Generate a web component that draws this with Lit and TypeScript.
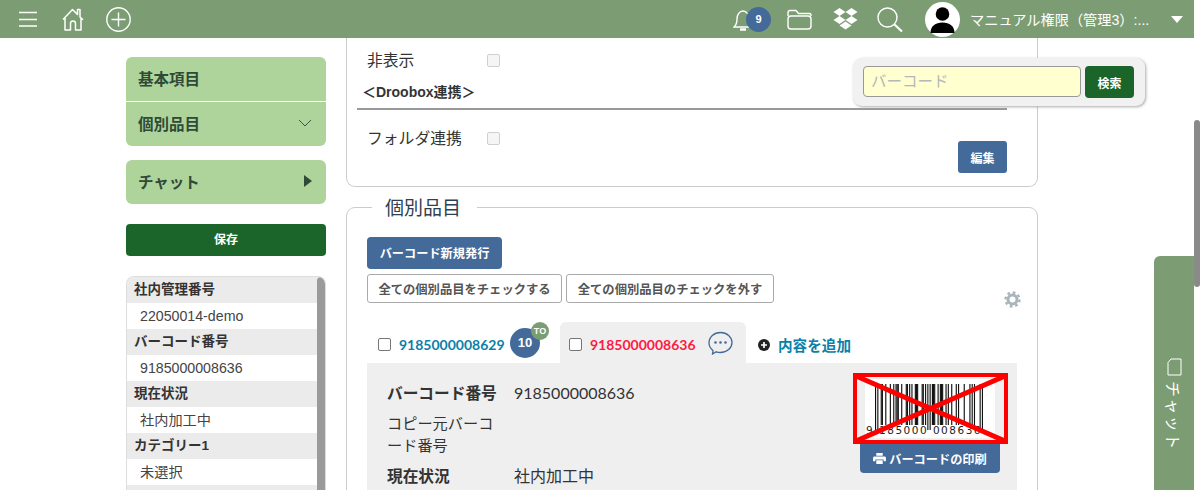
import { LitElement, html, css, svg } from "lit";
import { customElement } from "lit/decorators.js";

const L = ["0001101","0011001","0010011","0111101","0100011","0110001","0101111","0111011","0110111","0001011"];
const G = ["0100111","0110011","0011011","0100001","0011101","0111001","0000101","0010001","0001001","0010111"];
const R = ["1110010","1100110","1101100","1000010","1011100","1001110","1010000","1000100","1001000","1110100"];
const PARITY = "LGGLGL";

function ean(code: string): string {
  const d = code.split("").map(Number);
  let s = "101";
  for (let i = 0; i < 6; i++) s += (PARITY[i] === "L" ? L : G)[d[i + 1]];
  s += "01010";
  for (let i = 7; i < 13; i++) s += R[d[i]];
  return s + "101";
}

const SIDE_ROWS = [
  ["社内管理番号", "22050014-demo"],
  ["バーコード番号", "9185000008636"],
  ["現在状況", "社内加工中"],
  ["カテゴリー1", "未選択"],
  ["", ""],
];

@customElement("app-root")
export class AppRoot extends LitElement {
  static styles = css`
    :host {
      display: flex;
      position: relative;
      width: 1200px;
      height: 490px;
      overflow: hidden;
      background: #fff;
      font-family: "Liberation Sans", "Noto Sans CJK JP", sans-serif;
      color: #333;
    }
    * { box-sizing: border-box; }
    .page { width: 1194px; flex: none; display: flex; flex-direction: column; }
    .track { width: 6px; flex: none; padding-top: 120px; }
    .thumb { height: 167px; background: #8a8a8a; border-radius: 3px; }

    .top {
      height: 38px; flex: none; background: #7c9d74; color: #fff;
      display: flex; align-items: center; padding-left: 19px;
    }
    .top svg { display: block; flex: none; }
    .i-home { margin-left: 25px; }
    .i-plus { margin-left: 22px; }
    .spring { flex: 1; }
    .bell { position: relative; width: 38px; height: 25px; flex: none; }
    .bell-badge {
      position: absolute; left: 13px; top: 0; width: 25px; height: 25px; border-radius: 50%;
      background: #436a99; color: #fff; font: bold 11px/25px "Liberation Sans", sans-serif; text-align: center;
    }
    .i-folder { margin-left: 16px; }
    .i-drop { margin-left: 21px; }
    .i-search { margin-left: 19px; }
    .avatar { margin-left: 22px; }
    .uname { margin-left: 10px; width: 191px; font-size: 14.2px; white-space: nowrap; overflow: hidden; }
    .caret { margin-left: 10px; margin-right: 11px; }

    .body { flex: 1; display: flex; padding-left: 126px; min-height: 0; }
    .side { width: 200px; flex: none; padding-top: 19px; margin-right: 20px; display: flex; flex-direction: column; }
    .side > * { flex: none; }
    .menu { border-radius: 6px; overflow: hidden; background: #aed49c; }
    .menu + .menu { margin-top: 14px; }
    .mi {
      height: 44px; display: flex; align-items: center; justify-content: space-between;
      padding: 0 14px 2px 12px; font-size: 15.5px; font-weight: bold; color: #2f4a36;
    }
    .mi + .mi { border-top: 1px solid #fff; height: 45px; }
    .save {
      height: 32px; margin-top: 20px; background: #1b652b; color: #fff; border-radius: 4px; padding-bottom: 3px;
      font-size: 12px; font-weight: bold; display: flex; align-items: center; justify-content: center;
    }
    .list {
      margin-top: 20px; border: 1px solid #ddd; border-bottom: none; border-radius: 8px 8px 0 0;
      position: relative; overflow: hidden; height: 220px;
    }
    .list .h { height: 26px; background: #ebebeb; padding: 0 7px; font-size: 13.5px; font-weight: bold; line-height: 26px; color: #333; }
    .list .v { height: 26px; padding: 0 13px; font-size: 14.2px; line-height: 26px; color: #444; background: #fff; }
    .bar { position: absolute; right: 0; top: 0; bottom: 0; width: 8px; background: #9a9a9a; border-radius: 4px 4px 0 0; }

    .main { width: 692px; flex: none; }
    .card1 {
      height: 149px; border: 1px solid #ccc; border-top: none; border-radius: 0 0 9px 9px;
      padding: 0 30px 0 10px; position: relative;
    }
    .frow { display: flex; align-items: flex-start; padding-left: 10px; font-size: 15.8px; color: #333; }
    .frow .lab { width: 120px; line-height: 22px; }
    .cb {
      appearance: none; width: 13px; height: 13px; margin: 0; border-radius: 2px; flex: none;
      border: 1px solid #767676; background: #fff;
    }
    .cb.off { border-color: #d0d0d0; background: #f5f5f5; margin-top: 4px; }
    .r1 { padding-top: 12px; }
    .sect { margin-top: 10px; padding-left: 5px; font-size: 14px; font-weight: bold; color: #333; line-height: 20px; height: 26px; }
    .rule { height: 2px; background: #999; }
    .r2 { padding-top: 18px; }
    .edit-row { display: flex; justify-content: flex-end; margin-top: -9px; }
    .btn {
      background: #436a99; color: #fff; border-radius: 3px; font-weight: bold;
      display: flex; align-items: center; justify-content: center; gap: 3px;
    }
    .edit { width: 49px; height: 32px; font-size: 12px; }

    fieldset { margin: 8px 0 0; padding: 18px 20px 0; border: 1px solid #ccc; border-radius: 9px; min-width: 0; height: 320px; }
    legend { margin-left: 5px; padding: 0 16px 0 13px; font-size: 19px; line-height: 28px; color: #2f4050; height: 24px; }
    .issue { width: 135px; height: 32px; font-size: 12.2px; border-radius: 4px; }
    .outlines { display: flex; gap: 4px; margin-top: 5px; }
    .ol {
      height: 29px; border: 1px solid #aaa; border-radius: 3px; background: #fff; color: #555;
      font-size: 12.3px; font-weight: bold; display: flex; align-items: center; justify-content: center;
    }
    .ol.a { width: 195px; }
    .ol.b { width: 208px; }
    .gear-row { display: flex; justify-content: flex-end; height: 0; margin-right: -4px; }
    .gear-row svg { margin-top: -12px; }
    .tabs { display: flex; height: 41px; margin-top: 19px; }
    .tab { display: flex; align-items: center; position: relative; padding-top: 4px; }
    .tab .cb { margin-right: 8px; }
    .tab.t1 { width: 193px; padding-left: 11px; }
    .tab.t2 { width: 186px; padding-left: 9px; background: #efefef; border-radius: 6px 6px 0 0; }
    .num { font-size: 14px; font-weight: bold; font-family: Lato, "Liberation Sans", sans-serif; }
    .blue { color: #0a7fa8; }
    .red { color: #ff1a44; }
    .cnt {
      position: absolute; left: 143px; top: 6px; width: 30px; height: 30px; border-radius: 50%;
      background: #436a99; color: #fff; font-size: 13px; font-weight: bold; text-align: center; line-height: 30px;
    }
    .to {
      position: absolute; left: 164px; top: 0; width: 18px; height: 18px; border-radius: 50%;
      background: #7c9d74; color: #fff; font-size: 9px; font-weight: bold; text-align: center; line-height: 18px;
    }
    .bubble { margin-left: 12px; margin-top: -4px; }
    .add { display: flex; align-items: center; padding-left: 12px; padding-top: 4px; gap: 8px; font-size: 14.6px; font-weight: bold; color: #0a7fa8; }
    .panel { width: 650px; height: 200px; background: #efefef; display: flex; justify-content: space-between; padding: 10px 9px 0 20px; }
    .fields { width: 300px; padding-top: 9px; font-family: Lato, "Noto Sans CJK JP", sans-serif; font-size: 15.2px; color: #333; }
    .frw { display: flex; margin-bottom: 9px; }
    .frw:first-child { margin-bottom: 8px; }
    .frw .k { width: 127px; padding-right: 16px; line-height: 22px; }
    .frw .k.b { font-weight: bold; font-size: 15.7px; padding-right: 0; }
    .frw .val { line-height: 22px; font-size: 16px; }
    .bc { width: 155px; display: flex; flex-direction: column; align-items: flex-start; }
    .bc svg { display: block; }
    .print { width: 140px; height: 29px; font-size: 12.2px; border-radius: 0 0 4px 4px; margin-left: 7px; }
    .print svg { width: 13px; height: 11px; }

    .search {
      position: absolute; left: 853px; top: 58px; width: 292px; height: 48px; background: #f1f1f1;
      border-radius: 9px; box-shadow: 1px 1px 3px #aaa; display: flex; gap: 4px; padding: 8px 10px;
    }
    .search .inp {
      width: 218px; height: 31px; background: #ffffd0; border: 1px solid #999; border-radius: 4px;
      padding: 0 7px; font-size: 15.5px; line-height: 29px; color: #b4b8b8;
    }
    .search .go {
      width: 49px; height: 32px; background: #1b652b; color: #fff; border-radius: 4px; font-size: 12px;
      font-weight: bold; display: flex; align-items: center; justify-content: center;
    }
    .chat {
      position: absolute; left: 1154px; top: 256px; width: 40px; height: 234px; background: #7c9d74;
      border-radius: 6px 0 0 0; color: #fff; display: flex; flex-direction: column; align-items: center; padding-top: 102px;
    }
    .chat span { writing-mode: vertical-rl; text-orientation: sideways; font-size: 16px; margin-top: 5px; letter-spacing: 1.5px; }
  `;

  private barcode() {
    const bits = ean("9185000008636");
    const m = 108 / 95;
    const guard = new Set([0, 1, 2, 45, 46, 47, 48, 49, 92, 93, 94]);
    const bars = bits.split("").map((b, i) =>
      b === "1"
        ? svg`<rect x=${22 + i * m} y="11" width=${m} height=${guard.has(i) ? 46 : 41} fill="#111"></rect>`
        : null
    );
    return html`<svg width="155" height="71" viewBox="0 0 155 71">
      <rect x="12" y="6" width="130" height="59" fill="#fff"></rect>
      ${bars}
      <text x="13" y="61" font-family="'DejaVu Sans', sans-serif" font-size="10.5" fill="#222" letter-spacing="1.5">9 185000 008636</text>
      <rect x="2" y="2" width="151" height="67" fill="none" stroke="#f00" stroke-width="4"></rect>
      <line x1="3" y1="3" x2="152" y2="68" stroke="#f00" stroke-width="5"></line>
      <line x1="152" y1="3" x2="3" y2="68" stroke="#f00" stroke-width="5"></line>
    </svg>`;
  }

  render() {
    return html`
      <div class="page">
        <header class="top">
          <svg width="18" height="16" viewBox="0 0 18 16" stroke="#fff" stroke-width="1.3"><path d="M0 1.500h18M0 8.500h18M0 15h18"/></svg>
          <svg class="i-home" width="22" height="23" viewBox="0 0 22 23" fill="none" stroke="#fff" stroke-width="1.5" stroke-linejoin="round"><path d="M1 11.500 10.500 1.500l5 5V1.500h2.500v7.500l3 2.800M3 10v12h5.500v-6.500a2.500 2.500 0 0 1 5 0V22H19V10"/></svg>
          <svg class="i-plus" width="25" height="25" viewBox="0 0 25 25" fill="none" stroke="#fff" stroke-width="1.4"><circle cx="12.500" cy="12.500" r="11.700"/><path d="M12.500 5.500v14M5.500 12.500h14"/></svg>
          <div class="spring"></div>
          <div class="bell">
            <svg width="20" height="25" viewBox="0 0 20 25" fill="none" stroke="#fff" stroke-width="1.4"><path d="M1 20c2.500-2 3-4 3-8 0-4.500 2.500-8 6-8s6 3.500 6 8c0 4 .5 6 3 8z"/><path d="M7 22.500h6" stroke-width="2.500"/></svg>
            <div class="bell-badge">9</div>
          </div>
          <svg class="i-folder" width="25" height="21" viewBox="0 0 25 21" fill="none" stroke="#fff" stroke-width="1.4" stroke-linejoin="round"><path d="M1 7V3.500A2 2 0 0 1 3 1.500h6l2.500 3h11a1.500 1.500 0 0 1 1.500 1.500V7"/><rect x="1" y="7" width="23" height="13" rx="3"/></svg>
          <svg class="i-drop" width="25" height="22" viewBox="0 0 25 22" fill="#fff"><path d="M6.500 0 12.500 4 6.500 8 .5 4zM18.500 0 24.500 4 18.500 8 12.500 4zM.5 12 6.500 8 12.500 12 6.500 16zM24.500 12 18.500 8 12.500 12 18.500 16zM6.500 17.500 12.500 13.500 18.500 17.500 12.500 21.500z"/></svg>
          <svg class="i-search" width="26" height="25" viewBox="0 0 26 25" fill="none" stroke="#fff"><circle cx="10.500" cy="10.500" r="9.500" stroke-width="1.400"/><path d="M17.500 17.500 25 24.500" stroke-width="2.200"/></svg>
          <svg class="avatar" width="35" height="35" viewBox="0 0 35 35"><circle cx="17.500" cy="17.500" r="17.500" fill="#fff"/><circle cx="17.500" cy="12" r="6.800" fill="#000"/><path d="M5.500 31c0-7 5-10.500 12-10.500s12 3.500 12 10.500z" fill="#000"/></svg>
          <div class="uname">マニュアル権限（管理3）:...</div>
          <svg class="caret" width="12" height="7" viewBox="0 0 12 7" fill="#fff"><path d="M0 0h12L6 7z"/></svg>
        </header>

        <div class="body">
          <aside class="side">
            <div class="menu">
              <div class="mi">基本項目</div>
              <div class="mi">個別品目
                <svg width="14" height="8" viewBox="0 0 14 8" fill="none" stroke="#2f4a36" stroke-width=".9"><path d="M1 1l6 6 6-6"/></svg>
              </div>
            </div>
            <div class="menu">
              <div class="mi">チャット
                <svg width="8" height="12" viewBox="0 0 8 12" fill="#2f4a36"><path d="M0 0l8 6-8 6z"/></svg>
              </div>
            </div>
            <div class="save">保存</div>
            <div class="list">
              ${SIDE_ROWS.map(([h, v]) => html`<div class="h">${h}</div><div class="v">${v}</div>`)}
              <div class="bar"></div>
            </div>
          </aside>

          <main class="main">
            <section class="card1">
              <div class="frow r1"><span class="lab">非表示</span><input class="cb off" type="checkbox" disabled /></div>
              <div class="sect">＜Droobox連携＞</div>
              <div class="rule"></div>
              <div class="frow r2"><span class="lab">フォルダ連携</span><input class="cb off" type="checkbox" disabled /></div>
              <div class="edit-row"><div class="btn edit">編集</div></div>
            </section>

            <fieldset>
              <legend>個別品目</legend>
              <div class="btn issue">バーコード新規発行</div>
              <div class="outlines">
                <div class="ol a">全ての個別品目をチェックする</div>
                <div class="ol b">全ての個別品目のチェックを外す</div>
              </div>
              <div class="gear-row">
                <svg width="17" height="17" viewBox="0 0 17 17" fill="none" stroke="#a9b5bd"><circle cx="8.500" cy="8.500" r="4.500" stroke-width="3"/><circle cx="8.500" cy="8.500" r="7" stroke-width="2.400" stroke-dasharray="2.700 2.800"/></svg>
              </div>
              <div class="tabs">
                <div class="tab t1">
                  <input class="cb" type="checkbox" />
                  <span class="num blue">9185000008629</span>
                  <div class="cnt">10</div>
                  <div class="to">TO</div>
                </div>
                <div class="tab t2">
                  <input class="cb" type="checkbox" />
                  <span class="num red">9185000008636</span>
                  <svg class="bubble" width="25" height="24" viewBox="0 0 25 24" fill="none" stroke="#436a99" stroke-width="1.300"><path d="M5 19.500C2.500 17.500 1 15 1 12 1 6 6 1.500 12.500 1.500S24 6 24 11.500 19 21.500 12.500 21.500c-1.500 0-3-.2-4.300-.7L4.500 23z"/><g fill="#436a99" stroke="none"><circle cx="7.500" cy="11.500" r="1.300"/><circle cx="12.500" cy="11.500" r="1.300"/><circle cx="17.500" cy="11.500" r="1.300"/></g></svg>
                </div>
                <div class="add">
                  <svg width="12" height="12" viewBox="0 0 12 12"><circle cx="6" cy="6" r="6" fill="#222"/><path d="M6 3v6M3 6h6" stroke="#fff" stroke-width="1.700"/></svg>
                  内容を追加
                </div>
              </div>
              <div class="panel">
                <div class="fields">
                  <div class="frw"><div class="k b">バーコード番号</div><div class="val">9185000008636</div></div>
                  <div class="frw"><div class="k">コピー元バーコード番号</div><div class="val"></div></div>
                  <div class="frw"><div class="k b">現在状況</div><div class="val">社内加工中</div></div>
                </div>
                <div class="bc">
                  ${this.barcode()}
                  <div class="btn print">
                    <svg viewBox="0 0 14 12" fill="#fff"><path d="M3.500 0h7v3h-7zM1.500 3.800h11A1.500 1.500 0 0 1 14 5.300V9h-2.500V7h-9v2H0V5.300a1.500 1.500 0 0 1 1.500-1.500zM3.500 8h7v4h-7z"/></svg>
                    バーコードの印刷
                  </div>
                </div>
              </div>
            </fieldset>
          </main>
        </div>
      </div>
      <div class="track"><div class="thumb"></div></div>

      <div class="search">
        <div class="inp">バーコード</div>
        <div class="go">検索</div>
      </div>
      <div class="chat">
        <svg width="15" height="18" viewBox="0 0 15 18" fill="none" stroke="#fff" stroke-width="1"><path d="M1 4.500 4 1h10v16H1z"/></svg>
        <span>チャット</span>
      </div>
    `;
  }
}
